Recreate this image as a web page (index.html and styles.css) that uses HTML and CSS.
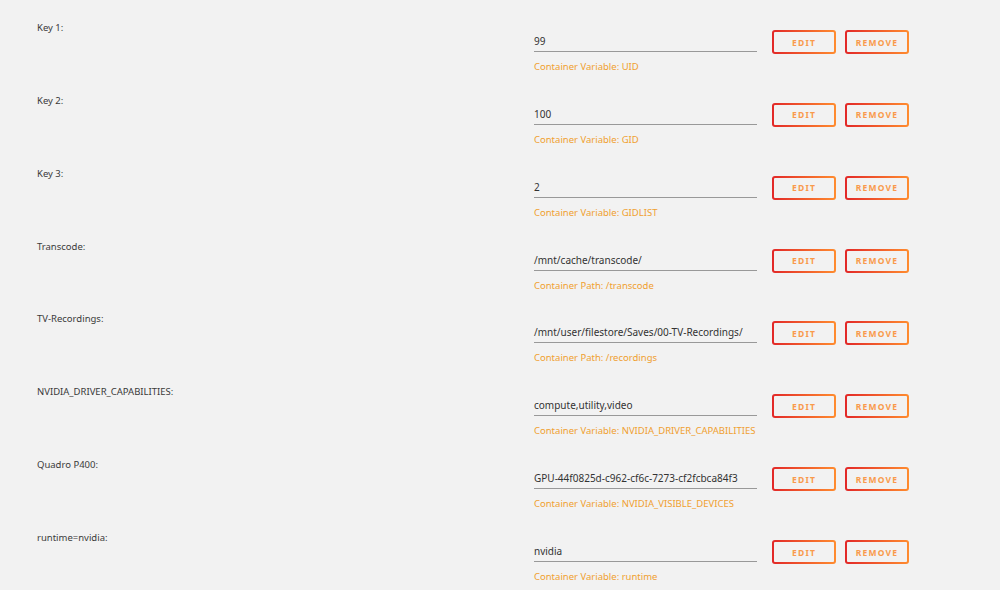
FILE: index.html
```html
<!DOCTYPE html>
<html lang="en">

<head>
    <meta charset="UTF-8">
    <meta name="viewport" content="width=device-width, initial-scale=1.0">
    <title>Container Settings</title>
    <link rel="stylesheet" href="styles.css">
</head>

<body>
    <div class="config-list">
        <div class="config-row">
            <div class="config-label">Key 1:</div>
            <div class="config-field">
                <div class="field-value">99</div>
                <div class="field-help">Container Variable: UID</div>
            </div>
            <button class="btn"><span>Edit</span></button>
            <button class="btn"><span>Remove</span></button>
        </div>
        <div class="config-row">
            <div class="config-label">Key 2:</div>
            <div class="config-field">
                <div class="field-value">100</div>
                <div class="field-help">Container Variable: GID</div>
            </div>
            <button class="btn"><span>Edit</span></button>
            <button class="btn"><span>Remove</span></button>
        </div>
        <div class="config-row">
            <div class="config-label">Key 3:</div>
            <div class="config-field">
                <div class="field-value">2</div>
                <div class="field-help">Container Variable: GIDLIST</div>
            </div>
            <button class="btn"><span>Edit</span></button>
            <button class="btn"><span>Remove</span></button>
        </div>
        <div class="config-row">
            <div class="config-label">Transcode:</div>
            <div class="config-field">
                <div class="field-value">/mnt/cache/transcode/</div>
                <div class="field-help">Container Path: /transcode</div>
            </div>
            <button class="btn"><span>Edit</span></button>
            <button class="btn"><span>Remove</span></button>
        </div>
        <div class="config-row">
            <div class="config-label">TV-Recordings:</div>
            <div class="config-field">
                <div class="field-value">/mnt/user/filestore/Saves/00-TV-Recordings/</div>
                <div class="field-help">Container Path: /recordings</div>
            </div>
            <button class="btn"><span>Edit</span></button>
            <button class="btn"><span>Remove</span></button>
        </div>
        <div class="config-row">
            <div class="config-label">NVIDIA_DRIVER_CAPABILITIES:</div>
            <div class="config-field">
                <div class="field-value">compute,utility,video</div>
                <div class="field-help">Container Variable: NVIDIA_DRIVER_CAPABILITIES</div>
            </div>
            <button class="btn"><span>Edit</span></button>
            <button class="btn"><span>Remove</span></button>
        </div>
        <div class="config-row">
            <div class="config-label">Quadro P400:</div>
            <div class="config-field">
                <div class="field-value">GPU-44f0825d-c962-cf6c-7273-cf2fcbca84f3</div>
                <div class="field-help">Container Variable: NVIDIA_VISIBLE_DEVICES</div>
            </div>
            <button class="btn"><span>Edit</span></button>
            <button class="btn"><span>Remove</span></button>
        </div>
        <div class="config-row">
            <div class="config-label">runtime=nvidia:</div>
            <div class="config-field">
                <div class="field-value">nvidia</div>
                <div class="field-help">Container Variable: runtime</div>
            </div>
            <button class="btn"><span>Edit</span></button>
            <button class="btn"><span>Remove</span></button>
        </div>
    </div>
</body>

</html>
```

FILE: styles.css
```css
body {
    font-family: "Noto Sans", "Open Sans", sans-serif;
    margin: 0;
    padding: 0;
    background-color: #f2f2f2;
    color: #333;
    overflow: hidden;
}

.config-list {
    padding: 20px 0 0 37px;
}

/* Một dòng cấu hình */
.config-row {
    display: grid;
    grid-template-columns: 497px 238px 73px 64px;
    height: 72.86px;
    align-items: start;
}

.config-label {
    font-size: 9.5px;
    line-height: 16px;
    color: #3a3a3a;
}

.config-field {
    width: 223px;
    padding-top: 13px;
}

.field-value {
    font-size: 10px;
    line-height: 16px;
    padding-bottom: 2px;
    border-bottom: 1px solid #999;
    color: #333;
    white-space: nowrap;
}

.field-help {
    margin-top: 7px;
    font-size: 9.5px;
    line-height: 16px;
    color: #f0a030;
    white-space: nowrap;
}

.btn {
    width: 64px;
    height: 24px;
    margin-top: 10px;
    padding: 0;
    border: 2px solid transparent;
    border-radius: 3px;
    background:
        linear-gradient(#f2f2f2, #f2f2f2) padding-box,
        linear-gradient(90deg, #e22828, #ff8c2f) border-box;
    font-family: inherit;
    font-size: 8.5px;
    font-weight: bold;
    letter-spacing: 1.2px;
    text-transform: uppercase;
    cursor: pointer;
}

.btn span {
    color: #f99a4c;
}
```
